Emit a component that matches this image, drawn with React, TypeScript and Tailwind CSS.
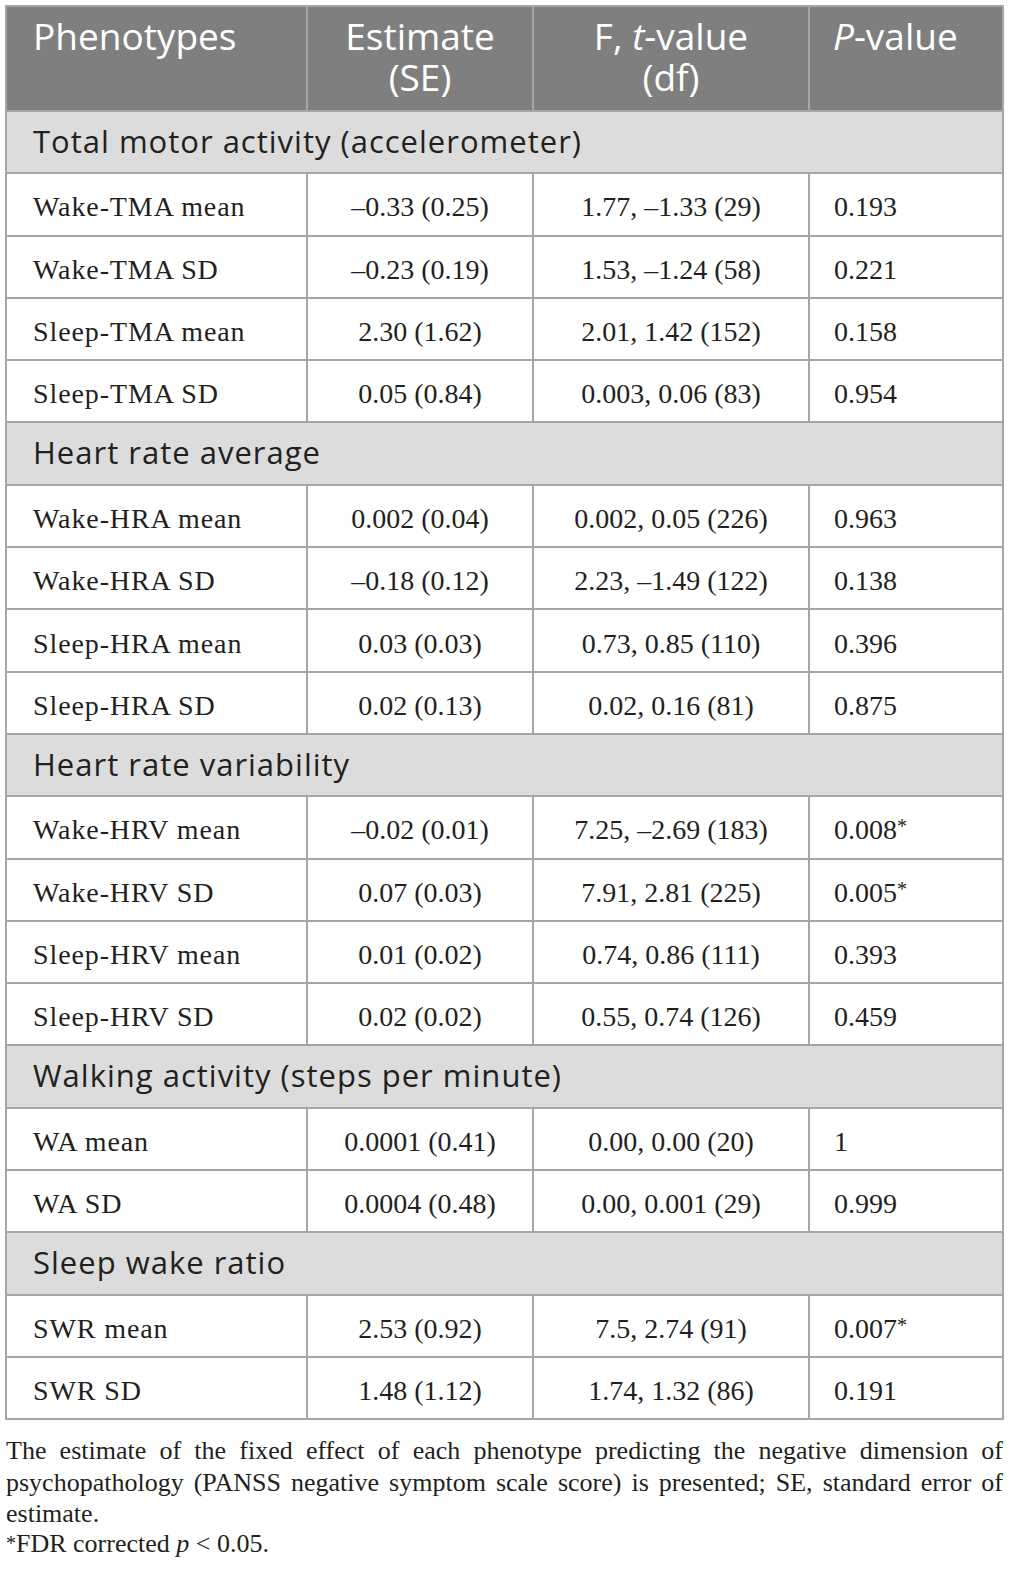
const sans = "font-['Open_Sans',sans-serif]";
const serif = "font-['Liberation_Serif',serif]";

interface DataRow {
  name: string;
  estimate: string;
  fvalue: string;
  p: string;
  star?: boolean;
}

interface Section {
  title: string;
  rows: DataRow[];
}

const sections: Section[] = [
  {
    title: "Total motor activity (accelerometer)",
    rows: [
      { name: "Wake-TMA mean", estimate: "–0.33 (0.25)", fvalue: "1.77, –1.33 (29)", p: "0.193" },
      { name: "Wake-TMA SD", estimate: "–0.23 (0.19)", fvalue: "1.53, –1.24 (58)", p: "0.221" },
      { name: "Sleep-TMA mean", estimate: "2.30 (1.62)", fvalue: "2.01, 1.42 (152)", p: "0.158" },
      { name: "Sleep-TMA SD", estimate: "0.05 (0.84)", fvalue: "0.003, 0.06 (83)", p: "0.954" },
    ],
  },
  {
    title: "Heart rate average",
    rows: [
      { name: "Wake-HRA mean", estimate: "0.002 (0.04)", fvalue: "0.002, 0.05 (226)", p: "0.963" },
      { name: "Wake-HRA SD", estimate: "–0.18 (0.12)", fvalue: "2.23, –1.49 (122)", p: "0.138" },
      { name: "Sleep-HRA mean", estimate: "0.03 (0.03)", fvalue: "0.73, 0.85 (110)", p: "0.396" },
      { name: "Sleep-HRA SD", estimate: "0.02 (0.13)", fvalue: "0.02, 0.16 (81)", p: "0.875" },
    ],
  },
  {
    title: "Heart rate variability",
    rows: [
      { name: "Wake-HRV mean", estimate: "–0.02 (0.01)", fvalue: "7.25, –2.69 (183)", p: "0.008", star: true },
      { name: "Wake-HRV SD", estimate: "0.07 (0.03)", fvalue: "7.91, 2.81 (225)", p: "0.005", star: true },
      { name: "Sleep-HRV mean", estimate: "0.01 (0.02)", fvalue: "0.74, 0.86 (111)", p: "0.393" },
      { name: "Sleep-HRV SD", estimate: "0.02 (0.02)", fvalue: "0.55, 0.74 (126)", p: "0.459" },
    ],
  },
  {
    title: "Walking activity (steps per minute)",
    rows: [
      { name: "WA mean", estimate: "0.0001 (0.41)", fvalue: "0.00, 0.00 (20)", p: "1" },
      { name: "WA SD", estimate: "0.0004 (0.48)", fvalue: "0.00, 0.001 (29)", p: "0.999" },
    ],
  },
  {
    title: "Sleep wake ratio",
    rows: [
      { name: "SWR mean", estimate: "2.53 (0.92)", fvalue: "7.5, 2.74 (91)", p: "0.007", star: true },
      { name: "SWR SD", estimate: "1.48 (1.12)", fvalue: "1.74, 1.32 (86)", p: "0.191" },
    ],
  },
];

const grid = "grid grid-cols-[299px_226px_276px_194px]";
const cell = "flex items-center pt-[6px]";

export default function App() {
  return (
    <div className="min-h-[1583px] w-[1014px] bg-white pt-[5px] text-[#231f20]">
      <div className="ml-[5px] w-[999px] border-2 border-[#a6a6a6]">
        {/* header */}
        <div className={`${grid} h-[103px] bg-[#7f7f7f] text-[37px] leading-[41px] text-white ${sans}`}>
          <div className="pl-[26px] pt-[8px]">Phenotypes</div>
          <div className="border-l-2 border-[#a6a6a6] pt-[8px] text-center">
            Estimate
            <br />
            (SE)
          </div>
          <div className="border-l-2 border-[#a6a6a6] pt-[8px] text-center">
            F, <i>t</i>-value
            <br />
            (df)
          </div>
          <div className="border-l-2 border-[#a6a6a6] pl-[23px] pt-[8px]">
            <i>P</i>-value
          </div>
        </div>

        {sections.map((section) => (
          <div key={section.title}>
            <div
              className={`flex h-[62.3px] items-center border-t-2 border-[#a6a6a6] bg-[#dcdcdc] pb-[2px] pl-[26px] text-[31px] tracking-[1px] ${sans}`}
            >
              {section.title}
            </div>
            {section.rows.map((row) => (
              <div
                key={row.name}
                className={`${grid} h-[62.3px] border-t-2 border-[#a6a6a6] text-[28px] ${serif}`}
              >
                <div className={`${cell} pl-[26px] tracking-[0.9px]`}>{row.name}</div>
                <div className={`${cell} justify-center border-l-2 border-[#a6a6a6]`}>
                  {row.estimate}
                </div>
                <div className={`${cell} justify-center border-l-2 border-[#a6a6a6]`}>
                  {row.fvalue}
                </div>
                <div className={`${cell} border-l-2 border-[#a6a6a6] pl-[24px]`}>
                  {row.p}
                  {row.star && <span className="-mt-[8px] text-[20px]">*</span>}
                </div>
              </div>
            ))}
          </div>
        ))}
      </div>

      <div className={`mt-[15px] ml-[6px] w-[997px] text-[26px] leading-[31.5px] ${serif}`}>
        <p className="text-justify">
          The estimate of the fixed effect of each phenotype predicting the negative dimension of
          psychopathology (PANSS negative symptom scale score) is presented; SE, standard error of
          estimate.
        </p>
        <p className="leading-[27px]">
          <span className="text-[20px] align-top">*</span>FDR corrected <i>p</i> &lt; 0.05.
        </p>
      </div>
    </div>
  );
}
